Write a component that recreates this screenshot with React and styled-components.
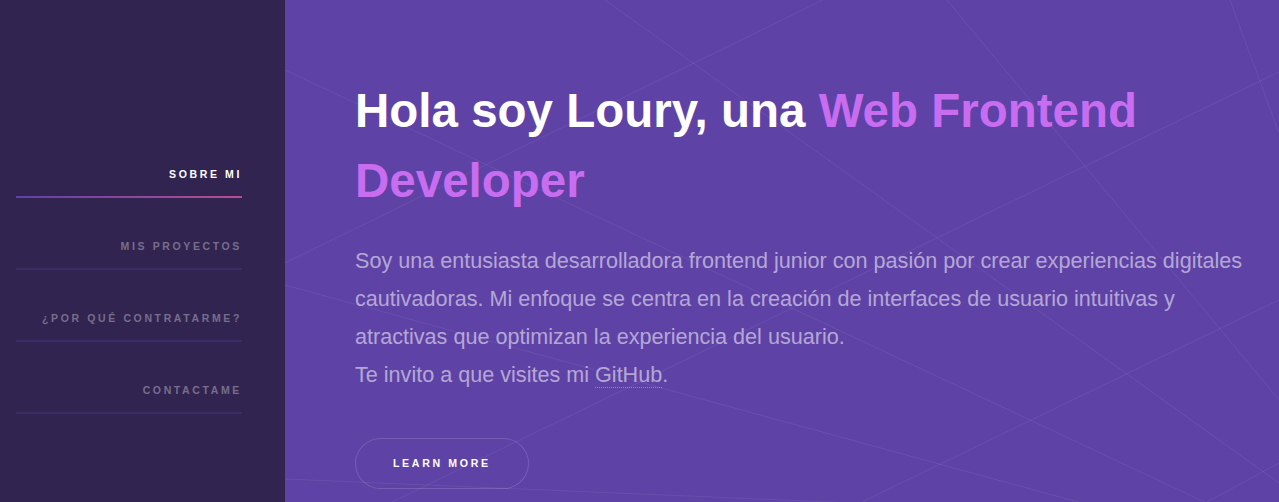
import React from "react";
import styled, { createGlobalStyle } from "styled-components";

const GlobalStyle = createGlobalStyle`
  html, body {
    margin: 0;
    padding: 0;
    background: #5e42a6;
  }
  body {
    font-family: "Liberation Sans", Arial, Helvetica, sans-serif;
  }
`;

const navItems = [
  { label: "Sobre mi", active: true },
  { label: "Mis proyectos" },
  { label: "¿Por qué contratarme?" },
  { label: "Contactame" },
];

// faint diagonal lines behind the intro, in the main panel's own coordinates
const lines = [
  [0, 70, 994, 537],
  [0, 263, 538, 0],
  [320, 0, 994, 483],
  [662, 0, 994, 400],
  [945, 0, 994, 133],
  [107, 502, 994, 72],
  [577, 502, 994, 300],
  [0, 285, 994, 557],
  [0, 479, 615, 505],
  [922, 502, 994, 463],
];

const App = () => {
  return (
    <Page>
      <GlobalStyle />
      <Sidebar>
        <Nav>
          {navItems.map((item) => (
            <NavLink key={item.label} href="#" $active={item.active}>
              <span>{item.label}</span>
              <Bar $active={item.active} />
            </NavLink>
          ))}
        </Nav>
      </Sidebar>
      <Main>
        <Backdrop viewBox="0 0 994 502" preserveAspectRatio="none">
          {lines.map(([x1, y1, x2, y2], i) => (
            <line key={i} x1={x1} y1={y1} x2={x2} y2={y2} />
          ))}
        </Backdrop>
        <Intro>
          <Title>
            Hola soy Loury, una <Accent>Web Frontend Developer</Accent>
          </Title>
          <Text>
            Soy una entusiasta desarrolladora frontend junior con pasión por
            crear experiencias digitales cautivadoras. Mi enfoque se centra en
            la creación de interfaces de usuario intuitivas y atractivas que
            optimizan la experiencia del usuario.
            <br />
            Te invito a que visites mi <TextLink href="#">GitHub</TextLink>.
          </Text>
          <Button href="#">Learn more</Button>
        </Intro>
      </Main>
    </Page>
  );
};

const Page = styled.div`
  display: flex;
  height: 100vh;
  overflow: hidden;
`;

const Sidebar = styled.aside`
  flex: 0 0 285px;
  background: #312450;
  padding: 165px 43px 0 16px;
  box-sizing: border-box;
`;

const Nav = styled.nav`
  display: flex;
  flex-direction: column;
`;

const NavLink = styled.a`
  display: flex;
  flex-direction: column;
  align-items: stretch;
  text-align: right;
  text-decoration: none;
  padding-top: 39px;
  font-size: 10.5px;
  line-height: 18px;
  font-weight: bold;
  letter-spacing: 0.25em;
  text-transform: uppercase;
  color: ${(p) => (p.$active ? "#ffffff" : "rgba(255, 255, 255, 0.35)")};
  &:first-child {
    padding-top: 0;
  }
  span {
    padding-bottom: 13px;
  }
`;

const Bar = styled.div`
  height: 2px;
  background: ${(p) =>
    p.$active
      ? "linear-gradient(to right, #5e42a6, #b74e91)"
      : "#3b2c65"};
`;

const Main = styled.main`
  flex: 1;
  position: relative;
  background: #5e42a6;
  padding: 76px 24px 0 70px;
  box-sizing: border-box;
`;

const Backdrop = styled.svg`
  position: absolute;
  inset: 0;
  width: 100%;
  height: 100%;
  pointer-events: none;
  line {
    stroke: rgba(255, 255, 255, 0.07);
    stroke-width: 1;
  }
`;

const Intro = styled.section`
  position: relative;
  display: flex;
  flex-direction: column;
  align-items: flex-start;
`;

const Title = styled.h1`
  margin: 0;
  font-size: 47.5px;
  line-height: 70px;
  font-weight: bold;
  color: #ffffff;
`;

const Accent = styled.span`
  color: #c86cf0;
`;

const Text = styled.p`
  margin: 26px 0 0;
  font-size: 21.6px;
  line-height: 38px;
  color: rgba(255, 255, 255, 0.55);
`;

const TextLink = styled.a`
  color: inherit;
  text-decoration: none;
  border-bottom: 1px dotted rgba(255, 255, 255, 0.35);
`;

const Button = styled.a`
  display: inline-block;
  margin-top: 44px;
  height: 51px;
  line-height: 51px;
  padding: 0 38px;
  border-radius: 3em;
  box-shadow: inset 0 0 0 1px rgba(255, 255, 255, 0.15);
  color: #ffffff;
  font-size: 10.6px;
  font-weight: bold;
  letter-spacing: 0.25em;
  text-transform: uppercase;
  text-decoration: none;
  white-space: nowrap;
`;

export default App;
